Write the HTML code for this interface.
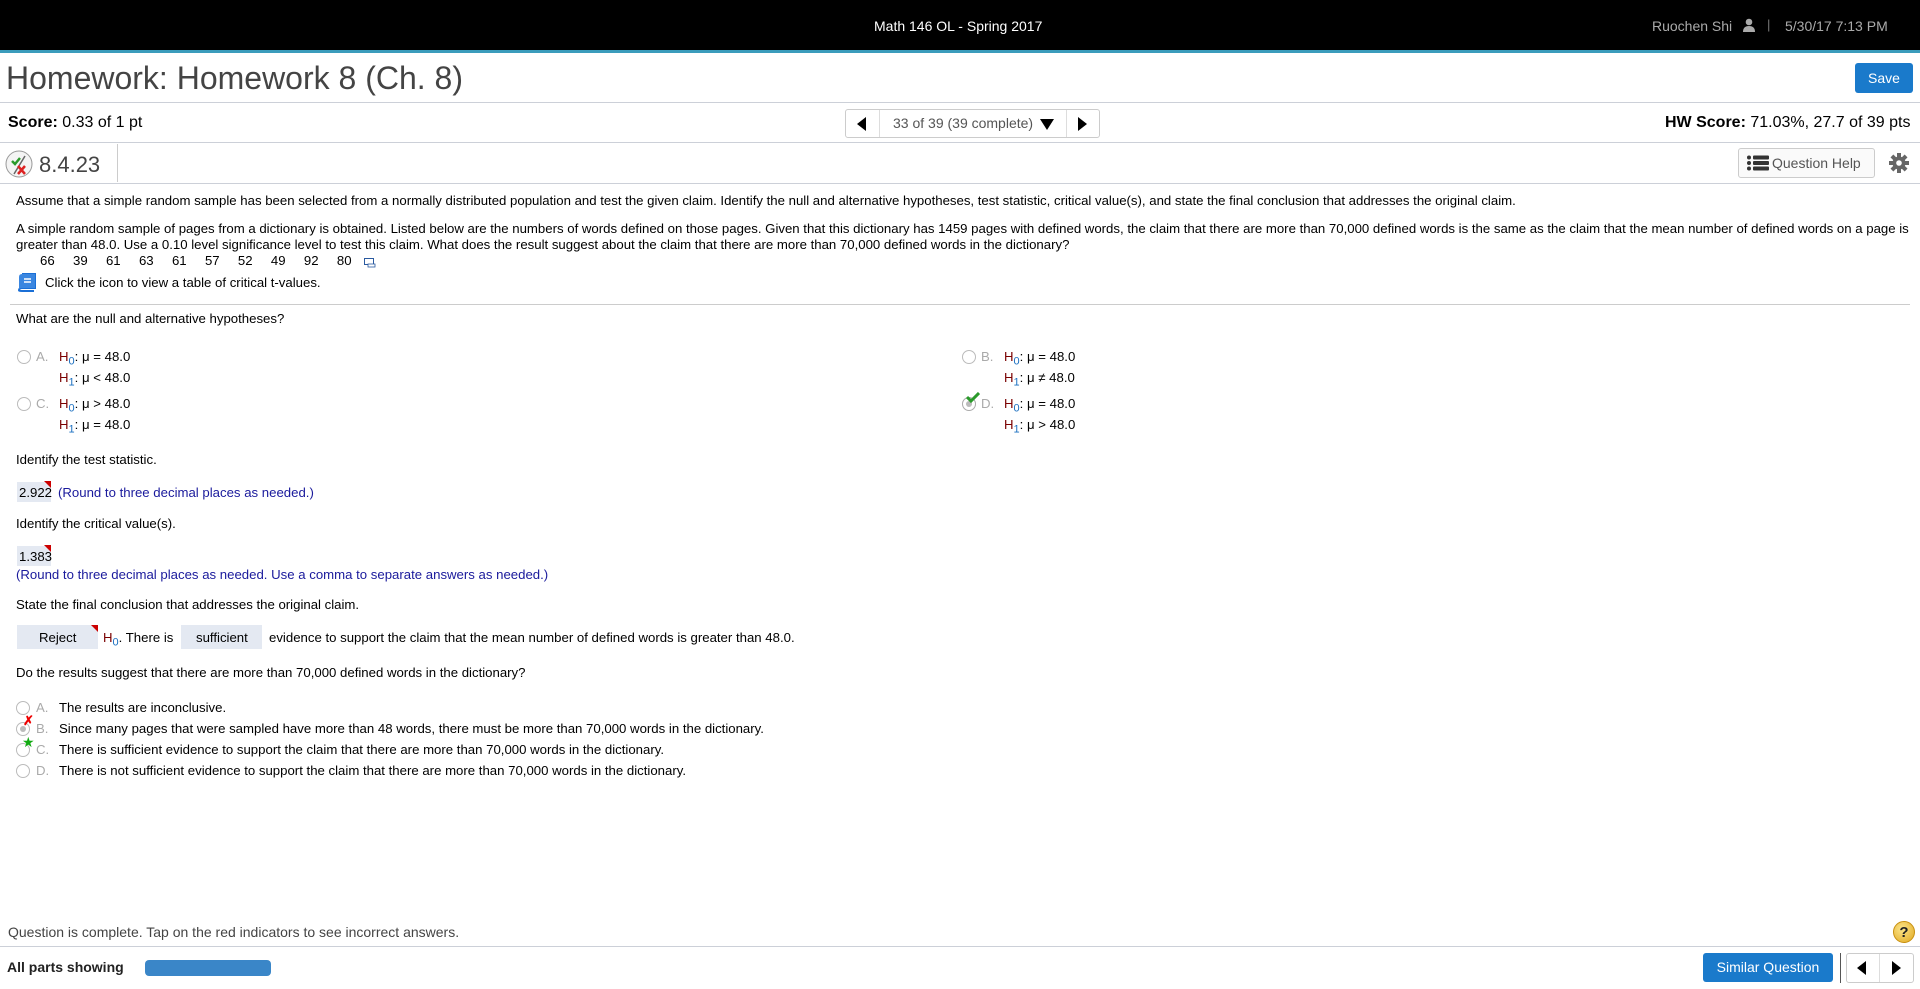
<!DOCTYPE html>
<html><head><meta charset="utf-8"><style>
*{margin:0;padding:0;box-sizing:border-box}
body{width:1920px;height:989px;overflow:hidden;background:#fff;font-family:"Liberation Sans",Arial,sans-serif;color:#000;position:relative;font-size:13.2px}
.a{position:absolute;white-space:nowrap}
.hl{position:absolute;left:0;width:1920px;height:1px;background:#ccd0d8}
.H{color:#7a0000}.H sub{color:#1a6fc0;font-size:11px}
.rad{position:absolute;width:14px;height:14px;border:1px solid #bbb;border-radius:50%;background:#fff}
.lbl{color:#aaa}
.blue{color:#1a1a9c}
.box{position:absolute;background:#e4e9f2}
.tri{position:absolute;width:0;height:0;border-top:7px solid #c00;border-left:7px solid transparent}
</style></head><body>
<div class="a" style="left:0;top:0;width:1920px;height:50px;background:#000"></div>
<div class="a" style="left:0;top:50px;width:1920px;height:3px;background:#3b9cbc"></div>
<div class="a" style="left:874px;top:18px;color:#fff;font-size:14px">Math 146 OL - Spring 2017</div>
<div class="a" style="left:1652px;top:18px;color:#aaa;font-size:14px">Ruochen Shi</div>
<svg class="a" style="left:1743px;top:18px" width="12" height="14" viewBox="0 0 12 14"><circle cx="6" cy="4" r="3.3" fill="#aaa"/><path d="M0 14 Q0 8 6 8 Q12 8 12 14Z" fill="#aaa"/></svg>
<div class="a" style="left:1767px;top:17px;color:#777">|</div>
<div class="a" style="left:1785px;top:18px;color:#aaa;font-size:14px">5/30/17 7:13 PM</div>

<div class="a" style="left:6px;top:60px;font-size:32px;color:#444">Homework: Homework 8 (Ch. 8)</div>
<div class="a" style="left:1855px;top:63px;width:58px;height:30px;background:#1a7acb;border-radius:3px;color:#fff;font-size:14px;text-align:center;line-height:30px">Save</div>
<div class="hl" style="top:102px"></div>
<div class="a" style="left:8px;top:114px;font-size:16px"><b>Score:</b> 0.33 of 1 pt</div>
<div class="a" style="left:845px;top:109px;width:255px;height:29px;border:1px solid #ccc;border-radius:3px;background:#fff"></div>
<div class="a" style="left:879px;top:110px;width:1px;height:27px;background:#ddd"></div>
<div class="a" style="left:1066px;top:110px;width:1px;height:27px;background:#ddd"></div>
<svg class="a" style="left:857px;top:117px" width="10" height="14"><path d="M9 0V14L0 7Z" fill="#000"/></svg>
<div class="a" style="left:893px;top:115px;color:#555;font-size:14px">33 of 39 (39 complete)</div>
<svg class="a" style="left:1040px;top:119px" width="14" height="11"><path d="M0 0H14L7 11Z" fill="#000"/></svg>
<svg class="a" style="left:1078px;top:117px" width="10" height="14"><path d="M0 0V14L9 7Z" fill="#000"/></svg>
<div class="a" style="left:1665px;top:114px;font-size:16px"><b>HW Score:</b> 71.03%, 27.7 of 39 pts</div>
<div class="hl" style="top:142px"></div>
<svg class="a" style="left:5px;top:148px" width="28" height="32"><circle cx="14" cy="16" r="13" fill="#f4f4f4" stroke="#999"/><path d="M7 13l3 3 5-6" stroke="#2a9a2a" stroke-width="2.5" fill="none"/><path d="M9 26L20 8" stroke="#666" stroke-width="1.5"/><path d="M13 18l7 8M20 18l-7 8" stroke="#d22" stroke-width="2.5"/></svg>
<div class="a" style="left:39px;top:152px;font-size:22px;color:#444">8.4.23</div>
<div class="a" style="left:117px;top:144px;width:1px;height:38px;background:#ccc"></div>
<div class="a" style="left:1738px;top:148px;width:137px;height:30px;border:1px solid #ccc;border-radius:3px;background:#fafafa"></div>
<svg class="a" style="left:1747px;top:155px" width="22" height="16"><g fill="#333"><circle cx="2" cy="2.5" r="2"/><circle cx="2" cy="8" r="2"/><circle cx="2" cy="13.5" r="2"/><rect x="6" y="0.5" width="16" height="4" rx="1"/><rect x="6" y="6" width="16" height="4" rx="1"/><rect x="6" y="11.5" width="16" height="4" rx="1"/></g></svg>
<div class="a" style="left:1772px;top:155px;color:#555;font-size:14px">Question Help</div>
<svg class="a" style="left:1889px;top:153px" width="20" height="20" viewBox="0 0 20 20"><g fill="#666"><circle cx="10" cy="10" r="6.5"/><rect x="8" y="0" width="4" height="20"/><rect x="0" y="8" width="20" height="4"/><rect x="8" y="0" width="4" height="20" transform="rotate(45 10 10)"/><rect x="8" y="0" width="4" height="20" transform="rotate(-45 10 10)"/></g><circle cx="10" cy="10" r="2.8" fill="#fff"/></svg>
<div class="hl" style="top:183px"></div>

<div class="a" style="left:16px;top:193px">Assume that a simple random sample has been selected from a normally distributed population and test the given claim. Identify the null and alternative hypotheses, test statistic, critical value(s), and state the final conclusion that addresses the original claim.</div>
<div class="a" style="left:16px;top:221px;line-height:16px;white-space:normal;width:1898px">A simple random sample of pages from a dictionary is obtained. Listed below are the numbers of words defined on those pages. Given that this dictionary has 1459 pages with defined words, the claim that there are more than 70,000 defined words is the same as the claim that the mean number of defined words on a page is greater than 48.0. Use a 0.10 level significance level to test this claim. What does the result suggest about the claim that there are more than 70,000 defined words in the dictionary?</div>
<div class="a" style="left:40px;top:253px;">66&nbsp;&nbsp;&nbsp;&nbsp;&nbsp;39&nbsp;&nbsp;&nbsp;&nbsp;&nbsp;61&nbsp;&nbsp;&nbsp;&nbsp;&nbsp;63&nbsp;&nbsp;&nbsp;&nbsp;&nbsp;61&nbsp;&nbsp;&nbsp;&nbsp;&nbsp;57&nbsp;&nbsp;&nbsp;&nbsp;&nbsp;52&nbsp;&nbsp;&nbsp;&nbsp;&nbsp;49&nbsp;&nbsp;&nbsp;&nbsp;&nbsp;92&nbsp;&nbsp;&nbsp;&nbsp;&nbsp;80</div>
<svg class="a" style="left:364px;top:258px" width="12" height="10"><rect x="0.5" y="0.5" width="9" height="6" fill="#fff" stroke="#2a5aa0"/><rect x="4" y="6" width="7" height="3" fill="#fff" stroke="#2a5aa0" stroke-width=".8"/></svg>
<svg class="a" style="left:18px;top:273px" width="18" height="19"><path d="M4 1H17V15H4Q1 15 1 17.5Q1 18 4 18H16" fill="none" stroke="#1a6fd6" stroke-width="2"/><path d="M4 1H17V15H4Q1 15 1 17V4Q1 1 4 1Z" fill="#3a86e0"/><path d="M6 6H13M6 9H13" stroke="#fff" stroke-width="1.4"/></svg>
<div class="a" style="left:45px;top:275px">Click the icon to view a table of critical t-values.</div>
<div class="a" style="left:10px;top:304px;width:1900px;height:1px;background:#ccc"></div>
<div class="a" style="left:16px;top:311px">What are the null and alternative hypotheses?</div>

<div class="rad" style="left:17px;top:350px"></div><div class="a lbl" style="left:36px;top:349px">A.</div>
<div class="a" style="left:59px;top:349px"><span class="H">H<sub>0</sub></span>: μ = 48.0</div>
<div class="a" style="left:59px;top:370px"><span class="H">H<sub>1</sub></span>: μ &lt; 48.0</div>
<div class="rad" style="left:17px;top:397px"></div><div class="a lbl" style="left:36px;top:396px">C.</div>
<div class="a" style="left:59px;top:396px"><span class="H">H<sub>0</sub></span>: μ &gt; 48.0</div>
<div class="a" style="left:59px;top:417px"><span class="H">H<sub>1</sub></span>: μ = 48.0</div>
<div class="rad" style="left:962px;top:350px"></div><div class="a lbl" style="left:981px;top:349px">B.</div>
<div class="a" style="left:1004px;top:349px"><span class="H">H<sub>0</sub></span>: μ = 48.0</div>
<div class="a" style="left:1004px;top:370px"><span class="H">H<sub>1</sub></span>: μ ≠ 48.0</div>
<div class="rad" style="left:962px;top:397px;border-color:#aaa"><div style="margin:3px;width:6px;height:6px;border-radius:50%;background:#bbb"></div></div>
<svg class="a" style="left:966px;top:392px" width="14" height="11"><path d="M1 5l4 4 8-8" stroke="#2a9a2a" stroke-width="3" fill="none"/></svg>
<div class="a lbl" style="left:981px;top:396px">D.</div>
<div class="a" style="left:1004px;top:396px"><span class="H">H<sub>0</sub></span>: μ = 48.0</div>
<div class="a" style="left:1004px;top:417px"><span class="H">H<sub>1</sub></span>: μ &gt; 48.0</div>

<div class="a" style="left:16px;top:452px">Identify the test statistic.</div>
<div class="box" style="left:17px;top:482px;width:34px;height:20px"></div><div class="tri" style="left:44px;top:481px"></div>
<div class="a" style="left:19px;top:485px">2.922</div>
<div class="a blue" style="left:58px;top:485px">(Round to three decimal places as needed.)</div>
<div class="a" style="left:16px;top:516px">Identify the critical value(s).</div>
<div class="box" style="left:17px;top:546px;width:34px;height:20px"></div><div class="tri" style="left:44px;top:545px"></div>
<div class="a" style="left:19px;top:549px">1.383</div>
<div class="a blue" style="left:16px;top:567px">(Round to three decimal places as needed. Use a comma to separate answers as needed.)</div>
<div class="a" style="left:16px;top:597px">State the final conclusion that addresses the original claim.</div>
<div class="box" style="left:17px;top:625px;width:81px;height:24px"></div><div class="tri" style="left:91px;top:625px"></div>
<div class="a" style="left:39px;top:630px">Reject</div>
<div class="a" style="left:103px;top:630px"><span class="H">H<sub>0</sub></span>. There is</div>
<div class="box" style="left:181px;top:625px;width:81px;height:24px"></div>
<div class="a" style="left:196px;top:630px">sufficient</div>
<div class="a" style="left:269px;top:630px">evidence to support the claim that the mean number of defined words is greater than 48.0.</div>
<div class="a" style="left:16px;top:665px">Do the results suggest that there are more than 70,000 defined words in the dictionary?</div>

<div class="rad" style="left:16px;top:701px"></div><div class="a lbl" style="left:36px;top:700px">A.</div>
<div class="a" style="left:59px;top:700px">The results are inconclusive.</div>
<div class="rad" style="left:16px;top:722px"><div style="margin:3px;width:6px;height:6px;border-radius:50%;background:#bbb"></div></div>
<div class="a" style="left:23px;top:713px;color:#e00;font-size:13px;font-weight:bold">✗</div>
<div class="a lbl" style="left:36px;top:721px">B.</div>
<div class="a" style="left:59px;top:721px">Since many pages that were sampled have more than 48 words, there must be more than 70,000 words in the dictionary.</div>
<div class="rad" style="left:16px;top:743px"></div>
<div class="a" style="left:22px;top:734px;color:#1a1;font-size:14px">★</div>
<div class="a lbl" style="left:36px;top:742px">C.</div>
<div class="a" style="left:59px;top:742px">There is sufficient evidence to support the claim that there are more than 70,000 words in the dictionary.</div>
<div class="rad" style="left:16px;top:764px"></div><div class="a lbl" style="left:36px;top:763px">D.</div>
<div class="a" style="left:59px;top:763px">There is not sufficient evidence to support the claim that there are more than 70,000 words in the dictionary.</div>

<div class="a" style="left:8px;top:924px;font-size:14px;color:#444">Question is complete. Tap on the red indicators to see incorrect answers.</div>
<div class="a" style="left:1893px;top:921px;width:22px;height:22px;border-radius:50%;background:radial-gradient(circle at 40% 35%,#fce58a,#e0a820);border:1px solid #c89010;text-align:center;font-weight:bold;font-size:15px;line-height:21px;color:#222">?</div>
<div class="hl" style="top:946px"></div>
<div class="a" style="left:7px;top:959px;font-size:14px;font-weight:bold;color:#222">All parts showing</div>
<div class="a" style="left:145px;top:960px;width:126px;height:16px;border-radius:4px;background:#3a86c8"></div>
<div class="a" style="left:1703px;top:953px;width:130px;height:29px;border-radius:3px;background:#1a7acb;color:#fff;font-size:14px;text-align:center;line-height:29px">Similar Question</div>
<div class="a" style="left:1840px;top:953px;width:1px;height:30px;background:#555"></div>
<div class="a" style="left:1846px;top:953px;width:68px;height:30px;border:1px solid #ccc;border-radius:3px"></div>
<div class="a" style="left:1879px;top:954px;width:1px;height:28px;background:#ddd"></div>
<svg class="a" style="left:1857px;top:961px" width="9" height="14"><path d="M9 0V14L0 7Z" fill="#000"/></svg>
<svg class="a" style="left:1892px;top:961px" width="9" height="14"><path d="M0 0V14L9 7Z" fill="#000"/></svg>
</body></html>
